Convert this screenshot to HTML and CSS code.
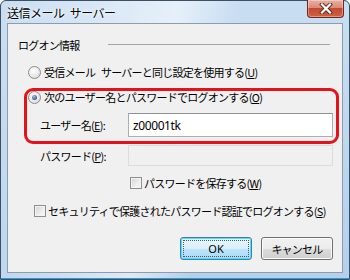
FILE: index.html
```html
<!DOCTYPE html>
<html lang="ja">
<head>
<meta charset="utf-8">
<link rel="stylesheet" href="styles.css">
</head>
<body>
<div class="window">
  <div class="titlebar">
    <span class="title">送信メール サーバー</span>
    <div class="close">
      <svg width="16" height="11" viewBox="0 0 16 11">
        <path d="M4 1.5 L12 9.5 M12 1.5 L4 9.5" stroke="#5a2a22" stroke-width="4" stroke-linecap="square"/>
        <path d="M4 1.5 L12 9.5 M12 1.5 L4 9.5" stroke="#ffffff" stroke-width="2.2" stroke-linecap="square"/>
      </svg>
    </div>
  </div>
  <div class="client">
    <div class="group-head">
      <span class="group-label">ログオン情報</span>
      <span class="group-line"></span>
    </div>
    <div class="row radio-row first">
      <span class="radio"></span>
      <span class="label">受信メール サーバーと同じ設定を使用する(<u>U</u>)</span>
    </div>
    <div class="row radio-row second">
      <span class="radio checked"></span>
      <span class="label">次のユーザー名とパスワードでログオンする(<u>O</u>)</span>
    </div>
    <div class="row field-row user">
      <span class="field-label">ユーザー名(<u>E</u>):</span>
      <span class="input">z00001tk</span>
    </div>
    <div class="row field-row pass">
      <span class="field-label">パスワード(<u>P</u>):</span>
      <span class="input disabled"></span>
    </div>
    <div class="row check-row save">
      <span class="check"></span>
      <span class="label">パスワードを保存する(<u>W</u>)</span>
    </div>
    <div class="row check-row secure">
      <span class="check"></span>
      <span class="label">セキュリティで保護されたパスワード認証でログオンする(<u>S</u>)</span>
    </div>
    <div class="buttons">
      <div class="btn default"><span class="focus">OK</span></div>
      <div class="btn">キャンセル</div>
    </div>
  </div>
  <div class="highlight"></div>
</div>
</body>
</html>
```
FILE: styles.css
```css
* { box-sizing: border-box; }
html, body { margin: 0; padding: 0; }
body {
  width: 350px;
  height: 280px;
  background: #ffffff;
  font-family: "Noto Sans CJK JP", "Noto Sans", sans-serif;
  font-size: 11px;
  letter-spacing: -0.75px;
  word-spacing: 4px;
  color: #000;
}
u { text-decoration: underline; text-underline-offset: 1px; }

.window {
  position: relative;
  width: 350px;
  height: 280px;
  border: 1px solid #3d4f63;
  border-radius: 6px 6px 0 0;
  padding: 0 6px 6px 6px;
  display: flex;
  flex-direction: column;
  background:
    linear-gradient(100deg, rgba(255,255,255,0) 0%, rgba(255,255,255,0.55) 45%, rgba(255,255,255,0) 60%),
    linear-gradient(to bottom, #c9def2 0%, #bcd6ee 60%, #b3d0ec 100%);
  box-shadow: inset 0 -1px 0 #2e9ad4;
}

.titlebar {
  height: 22px;
  display: flex;
  align-items: flex-start;
  justify-content: space-between;
}
.title {
  margin-top: 3px;
  font-size: 12px;
  letter-spacing: -0.5px;
  word-spacing: 3px;
  text-shadow: 0 0 4px #ffffff, 0 0 2px #ffffff;
}
.close {
  width: 37px;
  height: 18px;
  margin-right: -1px;
  margin-top: -1px;
  border: 1px solid #6b2a20;
  border-top: none;
  border-radius: 0 0 4px 4px;
  background: linear-gradient(to bottom, #eab0a4 0%, #dc8a78 45%, #c24a30 50%, #d0613f 100%);
  box-shadow: inset 0 0 0 1px rgba(255,255,255,0.35);
  display: flex;
  align-items: center;
  justify-content: center;
}

.client {
  flex: 1;
  background: #f0f0f0;
  border: 1px solid #8d9db0;
  display: flex;
  flex-direction: column;
}

.group-head {
  display: flex;
  align-items: center;
  height: 16px;
  margin-top: 13px;
  padding-left: 10px;
  padding-right: 12px;
}
.group-line {
  flex: 1;
  height: 1px;
  margin-left: 28px;
  background: #a5a5a5;
  margin-top: -1px;
}

.row { display: flex; align-items: center; }
.radio-row { height: 16px; padding-left: 20px; }
.radio-row.first { margin-top: 11px; }
.radio-row.second { margin-top: 9px; }
.radio {
  width: 13px;
  height: 13px;
  border-radius: 50%;
  border: 1px solid #8b8b8b;
  background: radial-gradient(circle at 40% 35%, #ffffff 0%, #e6e6e6 60%, #cfcfcf 100%);
  margin-right: 3px;
  flex: none;
  position: relative;
}
.radio.checked::after {
  content: "";
  position: absolute;
  left: 3px; top: 3px;
  width: 5px; height: 5px;
  border-radius: 50%;
  background: radial-gradient(circle at 40% 35%, #a9c2dc 0%, #3a5f86 70%, #2b4a6c 100%);
}

.field-row { padding-left: 32px; }
.field-label { width: 88px; flex: none; }
.field-row.user { margin-top: 8px; height: 24px; }
.field-row.pass { margin-top: 8px; height: 21px; }
.input {
  width: 205px;
  height: 100%;
  border: 1px solid #abadb3;
  border-top-color: #8e9296;
  background: #ffffff;
  display: flex;
  align-items: center;
  padding-left: 4px;
  letter-spacing: -0.4px;
  font-family: "Noto Sans", "Noto Sans CJK JP", sans-serif;
  font-size: 12px;
}
.input.disabled {
  background: #f0f0f0;
  border-color: #d9dde2;
}

.check-row { height: 16px; }
.check-row.save { margin-top: 9px; padding-left: 122px; }
.check-row.secure { margin-top: 12px; padding-left: 26px; }
.check {
  width: 12px;
  height: 12px;
  border: 1px solid #8f8f8f;
  background: linear-gradient(135deg, #d2d2d2 0%, #eeeeee 60%, #f8f8f8 100%);
  box-shadow: inset 0 0 0 1px #f4f4f4;
  margin-right: 2px;
  flex: none;
}

.buttons {
  display: flex;
  justify-content: flex-end;
  gap: 9px;
  margin-top: 18px;
  padding-right: 9px;
}
.btn {
  width: 72px;
  height: 23px;
  border: 1px solid #707070;
  border-radius: 3px;
  background: linear-gradient(to bottom, #f2f2f2 0%, #ebebeb 50%, #dddddd 51%, #cfcfcf 100%);
  box-shadow: inset 0 0 0 1px #fbfbfb;
  display: flex;
  align-items: center;
  justify-content: center;
}
.btn.default {
  border-color: #3c7fb1;
  background: linear-gradient(to bottom, #eaf6fd 0%, #d9f0fc 50%, #bee6fd 51%, #a7d9f5 100%);
  box-shadow: inset 0 0 0 1px #48e0fd;
  padding: 2px;
}
.focus {
  width: 100%;
  height: 100%;
  border: 1px dotted #555;
  display: flex;
  align-items: center;
  justify-content: center;
  font-family: "Noto Sans", sans-serif;
  letter-spacing: 0;
}

.highlight {
  position: absolute;
  left: 23px;
  top: 87px;
  width: 315px;
  height: 56px;
  border: 3px solid #e5121c;
  border-radius: 9px;
  pointer-events: none;
}
```
